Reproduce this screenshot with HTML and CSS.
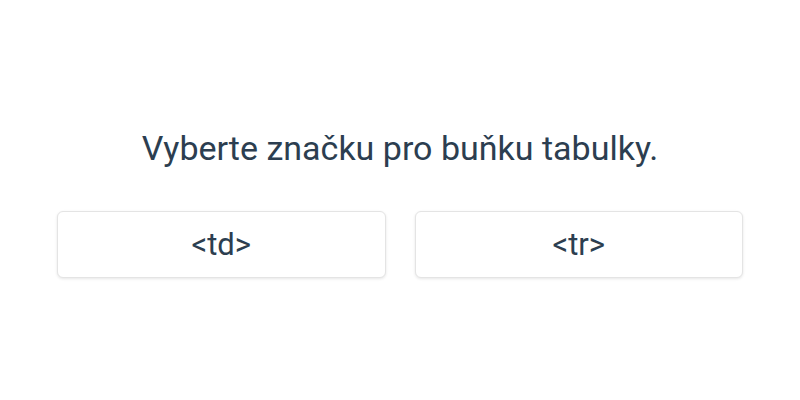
FILE: index.html
```html
<!DOCTYPE html>
<html lang="cs">
<head>
<meta charset="utf-8">
<link rel="stylesheet" href="styles.css">
</head>
<body>
<main class="quiz">
  <h1 class="question">Vyberte značku pro buňku tabulky.</h1>
  <div class="options">
    <button class="option">&lt;td&gt;</button>
    <button class="option">&lt;tr&gt;</button>
  </div>
</main>
</body>
</html>
```
FILE: styles.css
```css
html, body {
  margin: 0;
  padding: 0;
  background: #ffffff;
}
body {
  font-family: Roboto, "Noto Sans", sans-serif;
  color: #2c3e50;
  height: 400px;
  display: flex;
  align-items: center;
  justify-content: center;
}
.quiz {
  width: 686px;
  display: flex;
  flex-direction: column;
  align-items: center;
  padding-top: 6px;
}
.question {
  margin: 0 0 43px;
  font-size: 34px;
  font-weight: 400;
  line-height: 40px;
  text-align: center;
}
.options {
  width: 100%;
  display: grid;
  grid-template-columns: 1fr 1fr;
  gap: 29px;
}
.option {
  height: 67px;
  background: #ffffff;
  border: 1px solid #e4e4e4;
  border-radius: 6px;
  box-shadow: 0 1px 3px rgba(0, 0, 0, 0.1);
  font-family: Roboto, "Noto Sans", sans-serif;
  font-size: 31px;
  color: #2c3e50;
  padding: 0;
}
```
